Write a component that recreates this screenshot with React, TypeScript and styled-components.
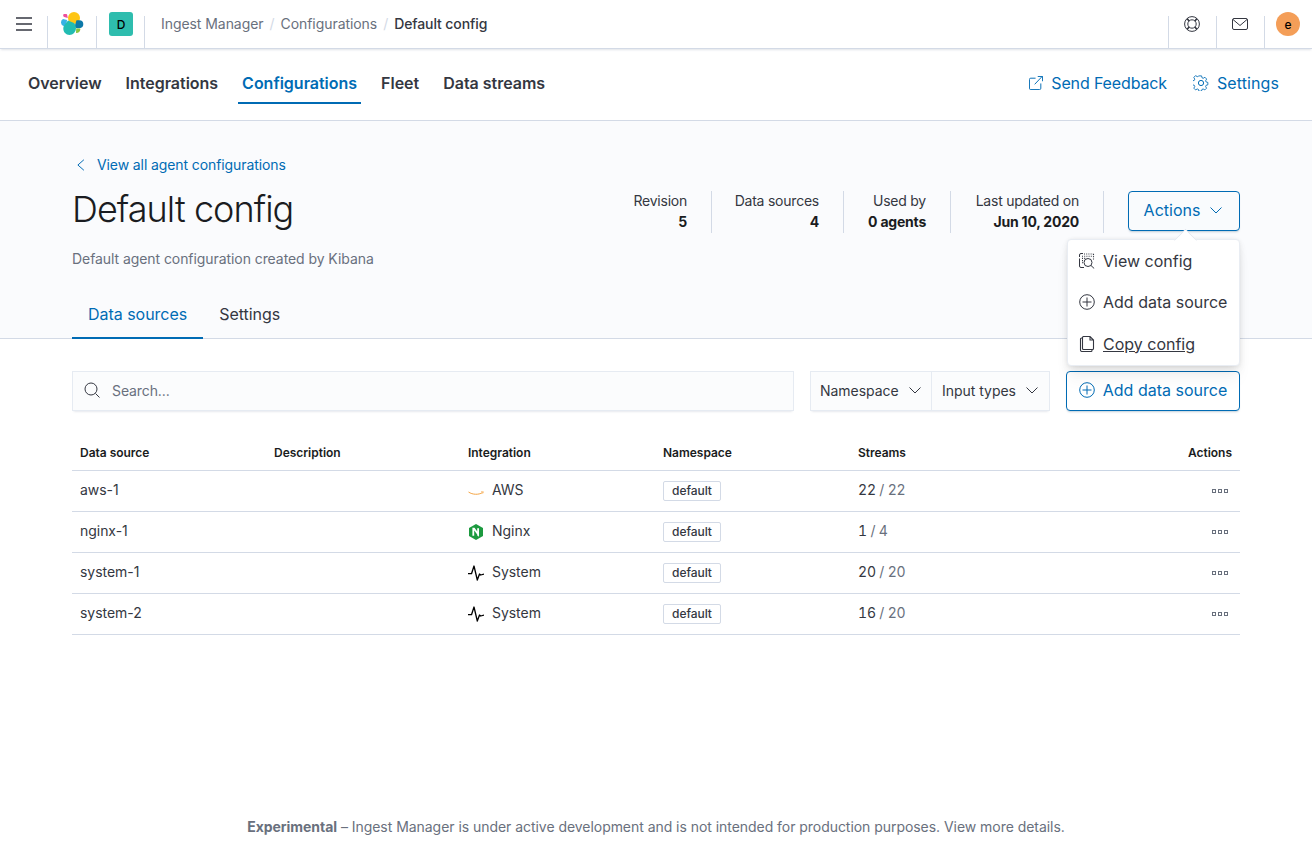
import React from 'react';
import styled, { createGlobalStyle } from 'styled-components';

const Global = createGlobalStyle`
  html, body { margin: 0; padding: 0; background: #fff; }
  body { font-family: Inter, "Liberation Sans", sans-serif; color: #343741; font-size: 14px; }
  * { box-sizing: border-box; }
`;

const Page = styled.div`
  width: 1312px; height: 854px; display: flex; flex-direction: column; overflow: hidden; position: relative;
`;
const Header = styled.header`
  height: 49px; flex: none; display: flex; justify-content: space-between; background: #fff;
  border-bottom: 1px solid #d3dae6; box-shadow: 0 2px 2px -1px rgba(152,162,179,.3);
  position: relative; z-index: 2;
`;
const HeaderSide = styled.div`display: flex; align-items: stretch;`;
const HeaderCell = styled.div<{ $w: number; $divided?: boolean }>`
  width: ${p => p.$w}px; height: 48px; display: flex; align-items: center; justify-content: center; position: relative;
  ${p => (p.$divided ? `&::after {
    content: ''; position: absolute; top: 16px; bottom: 0; left: 0; width: 1px; background: #d3dae6;
  }` : '')}
`;
const NudgedCell = styled(HeaderCell)`padding-left: 1px;`;
const AvatarCell = styled(HeaderCell)`padding-left: 2px;`;
const AvatarSquare = styled.div`
  width: 24px; height: 24px; border-radius: 3px; background: #2ebdae; color: #000; font-size: 12px; font-weight: 500;
  display: flex; align-items: center; justify-content: center;
`;
const AvatarRound = styled.div`
  width: 24px; height: 24px; border-radius: 50%; background: #f49e58; color: #000; font-size: 12px; font-weight: 500;
  display: flex; align-items: center; justify-content: center;
`;
const Crumbs = styled.nav`
  display: flex; align-items: center; padding-left: 16px; height: 47px; font-size: 14px; color: #69707d; gap: 6px;
  letter-spacing: -0.06px;
`;
const CrumbSep = styled.span`color: #d3dae6;`;
const CrumbNow = styled.span`color: #343741; font-weight: 500; letter-spacing: -0.1px;`;

const NavBar = styled.div`
  height: 72px; flex: none; display: flex; justify-content: space-between; align-items: flex-start;
  padding: 16px 33px 0 24px; border-bottom: 1px solid #d3dae6;
`;
const NavTabs = styled.div`display: flex; gap: 16px;`;
const NavTab = styled.div<{ $active?: boolean }>`
  height: 39px; padding: 0 4px 2px; display: flex; align-items: center; font-size: 16px; font-weight: 600;
  letter-spacing: -0.015px;
  color: ${p => (p.$active ? '#006bb4' : '#343741')};
  border-bottom: 2px solid ${p => (p.$active ? '#006bb4' : 'transparent')};
`;
const NavLinks = styled.div`display: flex; gap: 26px; height: 36px; align-items: center;`;
const NavLink = styled.div<{ $spacing: number }>`
  display: flex; align-items: center; gap: 8px; font-size: 16px; color: #006bb4; letter-spacing: ${p => p.$spacing}px;
`;

const Hero = styled.section`
  height: 218px; flex: none; background: #fafbfd; border-bottom: 1px solid #d3dae6; padding: 0 72px;
  display: flex; flex-direction: column;
`;
const HeroTop = styled.div`display: flex; justify-content: space-between; height: 174px;`;
const HeroLeft = styled.div`padding-top: 34px;`;
const BackLink = styled.div`
  display: flex; align-items: center; gap: 9px; color: #006bb4; font-size: 14px; line-height: 20px; padding-left: 4px;
  letter-spacing: -0.1px;
`;
const Title = styled.h1`
  margin: 10px 0 0; font-size: 36px; line-height: 48px; font-weight: 300; color: #1a1c21; letter-spacing: -0.95px;
`;
const Description = styled.p`margin: 16px 0 0; font-size: 14px; line-height: 20px; color: #69707d; letter-spacing: -0.07px;`;
const HeroRight = styled.div`display: flex; align-items: flex-start; padding-top: 70px;`;
const Stat = styled.div<{ $w: number }>`
  width: ${p => p.$w}px;
  display: flex; flex-direction: column; align-items: flex-end; gap: 1px; height: 42px; padding-right: 24px; font-size: 14px; line-height: 20px;
  border-right: 1px solid #d3dae6;
  color: #343741;
`;
const StatLabel = styled.span`letter-spacing: -0.23px;`;
const StatValue = styled.strong`font-weight: 700; color: #1a1c21; letter-spacing: -0.22px;`;
const ActionsWrap = styled.div`margin-left: 24px; position: relative;`;
const OutlineButton = styled.div<{ $w: number; $tint?: boolean }>`
  width: ${p => p.$w}px; height: 40px; border: 1px solid #006bb4; border-radius: 4px; color: #006bb4; font-size: 16px;
  display: flex; align-items: center; justify-content: center; gap: 8px; flex: none; padding-bottom: 2px;
  background: ${p => (p.$tint ? '#f9fbfd' : '#fff')};
  box-shadow: 0 2px 2px -1px rgba(54,97,126,.3);
`;
const Popover = styled.div`
  position: absolute; top: 48px; right: 0; width: 173px; height: 127px; background: #fff; border-radius: 4px; z-index: 5;
  box-shadow: 0 .9px 4px -1px rgba(0,0,0,.08), 0 2.6px 8px -1px rgba(0,0,0,.06), 0 5.7px 12px -1px rgba(0,0,0,.05), 0 15px 15px -1px rgba(0,0,0,.04);
  border: 1px solid #e9edf3;
  display: flex; flex-direction: column;
  &::before {
    content: ''; position: absolute; top: -8px; left: 108.5px; width: 16px; height: 16px; background: #fff;
    border-top: 1px solid #e3e7ee; border-left: 1px solid #e3e7ee;
    transform: rotate(45deg);
    clip-path: polygon(0 0, 100% 0, 0 100%);
  }
`;
const PopItem = styled.div<{ $hover?: boolean }>`
  height: 41.5px; display: flex; align-items: center; gap: 8px; padding-left: 11px; font-size: 16px; color: #343741;
  text-decoration: ${p => (p.$hover ? 'underline' : 'none')};
`;
const HeroTabs = styled.div`display: flex; gap: 0; height: 43px;`;
const HeroTab = styled.div<{ $active?: boolean }>`
  padding: 0 16px 4px; font-size: 16px; height: 44px; display: flex; align-items: center; letter-spacing: -0.03px;
  color: ${p => (p.$active ? '#006bb4' : '#343741')};
  border-bottom: 2px solid ${p => (p.$active ? '#006bb4' : 'transparent')};
`;

const Content = styled.main`padding: 32px 72px 0; flex: 1; display: flex; flex-direction: column;`;
const Toolbar = styled.div`display: flex; gap: 16px; height: 40px;`;
const SearchBox = styled.div`
  flex: 1; height: 40px; display: flex; align-items: center; gap: 12px; padding: 0 0 2px 11px; font-size: 14px; color: #69707d;
  background: #fbfcfd; border: 1px solid #e6ebf2; letter-spacing: -0.1px;
  box-shadow: 0 1px 1px -1px rgba(152,162,179,.2), 0 3px 2px -2px rgba(152,162,179,.2);
`;
const FilterGroup = styled.div`
  display: flex; height: 40px; background: #fbfcfd; border: 1px solid #e6ebf2; flex: none; width: 240px;
  box-shadow: 0 1px 1px -1px rgba(152,162,179,.2), 0 3px 2px -2px rgba(152,162,179,.2);
`;
const FilterButton = styled.div<{ $w: number; $pad: number; $divided?: boolean }>`
  width: ${p => p.$w}px; display: flex; align-items: center; gap: 8px; font-size: 14px; color: #343741;
  padding: 0 0 2px ${p => p.$pad}px; letter-spacing: -0.03px;
  ${p => (p.$divided ? 'border-right: 1px solid #e6ebf2;' : '')}
`;
const Table = styled.table`
  width: 1168px; table-layout: fixed; border-collapse: collapse; margin-top: 24px; font-size: 14px;
`;
const Col = styled.col<{ $w: number }>`width: ${p => p.$w}px;`;
const Th = styled.th<{ $right?: boolean }>`
  height: 35px; padding: 0 8px 0; text-align: ${p => (p.$right ? 'right' : 'left')}; font-size: 12px; font-weight: 600; color: #1a1c21;
  border-bottom: 1px solid #d3dae6; letter-spacing: -0.02px;
`;
const Td = styled.td<{ $right?: boolean; $flush?: boolean }>`
  height: 41px; padding: 0 8px ${p => (p.$flush ? 0 : 2)}px; text-align: ${p => (p.$right ? 'right' : 'left')}; color: #343741;
  border-bottom: 1px solid #d3dae6; letter-spacing: -0.04px;
`;
const StreamCount = styled.span`font-variant-numeric: tabular-nums; letter-spacing: -0.2px;`;
const IntegrationCell = styled.div`
  display: flex; align-items: center; gap: 8px;
  svg { margin-top: 2px; }
`;
const Badge = styled.span`
  display: inline-block; height: 20px; line-height: 17px; padding: 0 8px; border: 1px solid #d3dae6; border-radius: 2px;
  font-size: 12px; font-weight: 500; color: #343741; background: #fff; vertical-align: middle;
`;
const Muted = styled.span`color: #69707d;`;
const Dots = styled.div`display: flex; justify-content: flex-end; gap: 2px; margin-right: 4px;`;
const Dot = styled.i`display: block; width: 4px; height: 4px; border: 1px solid #69707d;`;
const Footer = styled.footer`
  position: absolute; left: 0; right: 0; bottom: 17px; text-align: center; font-size: 14px; line-height: 20px; color: #69707d;
  letter-spacing: -0.045px;
  strong { font-weight: 700; }
`;

const Ico = ({ s = 16, c = '#343741', sw = 1, children }: { s?: number; c?: string; sw?: number; children: React.ReactNode }) => (
  <svg width={s} height={s} viewBox="0 0 16 16" fill="none" stroke={c} strokeWidth={sw} style={{ flex: 'none' }}>{children}</svg>
);
const Chevron = ({ c = '#343741' }: { c?: string }) => (
  <Ico c={c}><path d="M2.5 5.5 8 11l5.5-5.5" /></Ico>
);
const Plus = ({ c = '#343741' }: { c?: string }) => (
  <Ico c={c}><circle cx="8" cy="8" r="7.300" /><path d="M8 3.500v9M3.500 8h9" /></Ico>
);
const Logo = () => (
  <svg width="24" height="24" viewBox="0 0 24 24" style={{ flex: 'none' }}>
    <path d="M3.800 2.100h2.400a1 1 0 0 1 1 .8l.6 3-3.600-.9a1.700 1.700 0 0 1-.4-2.900z" fill="#ee4f9b" />
    <path d="M3 7l4 1-.8 6-2.600.1A3.900 3.900 0 0 1 3 7z" fill="#36b2e4" />
    <circle cx="14" cy="6" r="6" fill="#fec514" />
    <path d="M16.500 8.200h2.700a4 4 0 0 1 .2 8l-3 .1-1.900-1.500z" fill="#0d79a8" />
    <path d="M16.200 16.400h3.800c.3 0 .5.3.4.6a4.300 4.300 0 0 1-4.400 3.900z" fill="#8bc43f" />
    <path d="M8 8.400l6 2.600a6.300 6.300 0 0 1 2 5c0 3.700-2.900 7-6.500 7S3.300 20.300 3.300 16.600c0-.8.200-1.600.4-2.300z" fill="#22bcb2" />
  </svg>
);
const Pulse = () => (
  <svg width="16" height="16" viewBox="0 0 16 16" fill="none" stroke="#000" strokeWidth="1.300" strokeLinejoin="round" style={{ flex: 'none' }}>
    <path d="M0 8.700h3.500L6 1l3.300 14 2.200-6 1.200 1L16 9" />
  </svg>
);

const rows = [
  { n: 'aws-1', i: 'AWS', a: 22, b: 22 },
  { n: 'nginx-1', i: 'Nginx', a: 1, b: 4 },
  { n: 'system-1', i: 'System', a: 20, b: 20 },
  { n: 'system-2', i: 'System', a: 16, b: 20 },
];
const IntegrationIcon = ({ name }: { name: string }) => {
  if (name === 'AWS') {
    return (
      <svg width="16" height="16" viewBox="0 0 16 16" fill="none" style={{ flex: 'none' }}>
        <path d="M.5 9c4 2.800 10 3 14 .6" stroke="#f5a544" strokeWidth="1" />
        <path d="M13 8.800h2.400l-.7 1.800" stroke="#f5a544" strokeWidth=".7" />
      </svg>
    );
  }
  if (name === 'Nginx') {
    return (
      <svg width="16" height="16" viewBox="0 0 16 16" style={{ flex: 'none' }}>
        <path d="M8 0 15 4v8L8 16 1 12V4z" fill="#1c9a3f" />
        <path d="M5.300 11.800V4.700h.8l4 5.600V4.200M10.100 10.300v1.500" fill="none" stroke="#fff" strokeWidth="1.800" />
      </svg>
    );
  }
  return <Pulse />;
};

export default function App() {
  return (
    <Page>
      <Global />
      <Header>
        <HeaderSide>
          <NudgedCell $w={47}>
            <Ico s={16} sw={1.500}><path d="M0 2h16M0 8h16M0 14h16" /></Ico>
          </NudgedCell>
          <NudgedCell $w={49} $divided><Logo /></NudgedCell>
          <AvatarCell $w={48} $divided><AvatarSquare>D</AvatarSquare></AvatarCell>
          <HeaderCell $w={1} $divided />
          <Crumbs>
            <span>Ingest Manager</span><CrumbSep>/</CrumbSep>
            <span>Configurations</span><CrumbSep>/</CrumbSep>
            <CrumbNow>Default config</CrumbNow>
          </Crumbs>
        </HeaderSide>
        <HeaderSide>
          <HeaderCell $w={48} $divided>
            <Ico>
              <circle cx="8" cy="8" r="7.400" /><circle cx="8" cy="8" r="4.200" />
              <path d="M3 2.600l2.200 2.400M13 2.600l-2.200 2.400M3 13.400l2.200-2.400M13 13.400l-2.200-2.400" strokeWidth="1.600" />
            </Ico>
          </HeaderCell>
          <HeaderCell $w={48} $divided>
            <Ico><rect x=".5" y="2.500" width="15" height="11" rx="1.500" /><path d="M1 3.500l7 6 7-6" /></Ico>
          </HeaderCell>
          <HeaderCell $w={48} $divided><AvatarRound>e</AvatarRound></HeaderCell>
        </HeaderSide>
      </Header>

      <NavBar>
        <NavTabs>
          <NavTab>Overview</NavTab>
          <NavTab>Integrations</NavTab>
          <NavTab $active>Configurations</NavTab>
          <NavTab>Fleet</NavTab>
          <NavTab>Data streams</NavTab>
        </NavTabs>
        <NavLinks>
          <NavLink $spacing={-0.14}>
            <Ico s={14} c="#006bb4" sw={1.100}><path d="M7.500 2.500H2A1.500 1.500 0 0 0 .5 4v10A1.500 1.500 0 0 0 2 15.500h10a1.500 1.500 0 0 0 1.500-1.500V8.500M6.500 9.500l8.500-9M10 .5h5.500V6" /></Ico>
            Send Feedback
          </NavLink>
          <NavLink $spacing={0.1}>
            <Ico c="#006bb4">
              <path d="M6.500.8h3l.5 2.200 1.400.6 2-1.200 2 2.100-1.200 2 .6 1.400 2 .5v2.800l-2 .5-.6 1.400 1.100 2-2 2-2-1.100-1.400.6-.5 2h-3l-.5-2-1.400-.6-2 1.100-2-2 1.100-2-.6-1.400-2-.5V6.500l2-.5.6-1.400-1.100-2 2-2.100 2 1.200 1.400-.6z" transform="translate(.4 .2) scale(.86)" strokeLinejoin="round" />
              <circle cx="8" cy="8" r="2.600" />
            </Ico>
            Settings
          </NavLink>
        </NavLinks>
      </NavBar>

      <Hero>
        <HeroTop>
          <HeroLeft>
            <BackLink>
              <Ico s={12} c="#006bb4"><path d="M10.500 1 2.500 8l8 7" strokeWidth="1.300" /></Ico>
              View all agent configurations
            </BackLink>
            <Title>Default config</Title>
            <Description>Default agent configuration created by Kibana</Description>
          </HeroLeft>
          <HeroRight>
            <Stat $w={103}><StatLabel>Revision</StatLabel><StatValue>5</StatValue></Stat>
            <Stat $w={132}><StatLabel>Data sources</StatLabel><StatValue>4</StatValue></Stat>
            <Stat $w={107}><StatLabel>Used by</StatLabel><StatValue>0 agents</StatValue></Stat>
            <Stat $w={153}><StatLabel>Last updated on</StatLabel><StatValue>Jun 10, 2020</StatValue></Stat>
            <ActionsWrap>
              <OutlineButton $w={112} $tint>Actions <Chevron c="#006bb4" /></OutlineButton>
              <Popover>
                <PopItem>
                  <Ico>
                    <path d="M.5 4V2A1.500 1.500 0 0 1 2 .5h2M.5 5.500V13A1.500 1.500 0 0 0 2 14.500h3" />
                    <path d="M5 1h9.500M3 3.200h11.500M3 5.400h4.500M3 7.600h2.500M3 9.800h1.500M14.500 1v6" strokeDasharray="1 1.200" strokeWidth="1.100" />
                    <circle cx="9" cy="9.500" r="4" /><path d="M12 12.500l3.200 3" />
                  </Ico>
                  View config
                </PopItem>
                <PopItem><Plus />Add data source</PopItem>
                <PopItem $hover>
                  <Ico sw={1.100}><path d="M3.500 12.500V1.500a1 1 0 0 1 1-1h6.500l3.500 3.500v8.500a1 1 0 0 1-1 1h-9a1 1 0 0 1-1-1zM3.500 2H2.500a1 1 0 0 0-1 1v11a1.500 1.500 0 0 0 1.500 1.500h9a1 1 0 0 0 1-1V13.500M11 .5V4h3.500" /></Ico>
                  Copy config
                </PopItem>
              </Popover>
            </ActionsWrap>
          </HeroRight>
        </HeroTop>
        <HeroTabs>
          <HeroTab $active>Data sources</HeroTab>
          <HeroTab>Settings</HeroTab>
        </HeroTabs>
      </Hero>

      <Content>
        <Toolbar>
          <SearchBox>
            <Ico><circle cx="7" cy="7" r="6" /><path d="M11.500 11.500l4 4" /></Ico>
            Search...
          </SearchBox>
          <FilterGroup>
            <FilterButton $w={121} $pad={9} $divided>Namespace <Chevron /></FilterButton>
            <FilterButton $w={117} $pad={10}>Input types <Chevron /></FilterButton>
          </FilterGroup>
          <OutlineButton $w={174}><Plus c="#006bb4" />Add data source</OutlineButton>
        </Toolbar>
        <Table>
          <colgroup>
            <Col $w={194} /><Col $w={194} /><Col $w={195} /><Col $w={195} /><Col $w={195} /><Col $w={195} />
          </colgroup>
          <thead>
            <tr>
              <Th>Data source</Th><Th>Description</Th><Th>Integration</Th><Th>Namespace</Th><Th>Streams</Th><Th $right>Actions</Th>
            </tr>
          </thead>
          <tbody>
            {rows.map(r => (
              <tr key={r.n}>
                <Td>{r.n}</Td>
                <Td />
                <Td><IntegrationCell><IntegrationIcon name={r.i} />{r.i}</IntegrationCell></Td>
                <Td $flush><Badge>default</Badge></Td>
                <Td><StreamCount>{r.a} <Muted>/ {r.b}</Muted></StreamCount></Td>
                <Td $right $flush><Dots><Dot /><Dot /><Dot /></Dots></Td>
              </tr>
            ))}
          </tbody>
        </Table>
      </Content>
      <Footer><strong>Experimental</strong> – Ingest Manager is under active development and is not intended for production purposes. View more details.</Footer>
    </Page>
  );
}
